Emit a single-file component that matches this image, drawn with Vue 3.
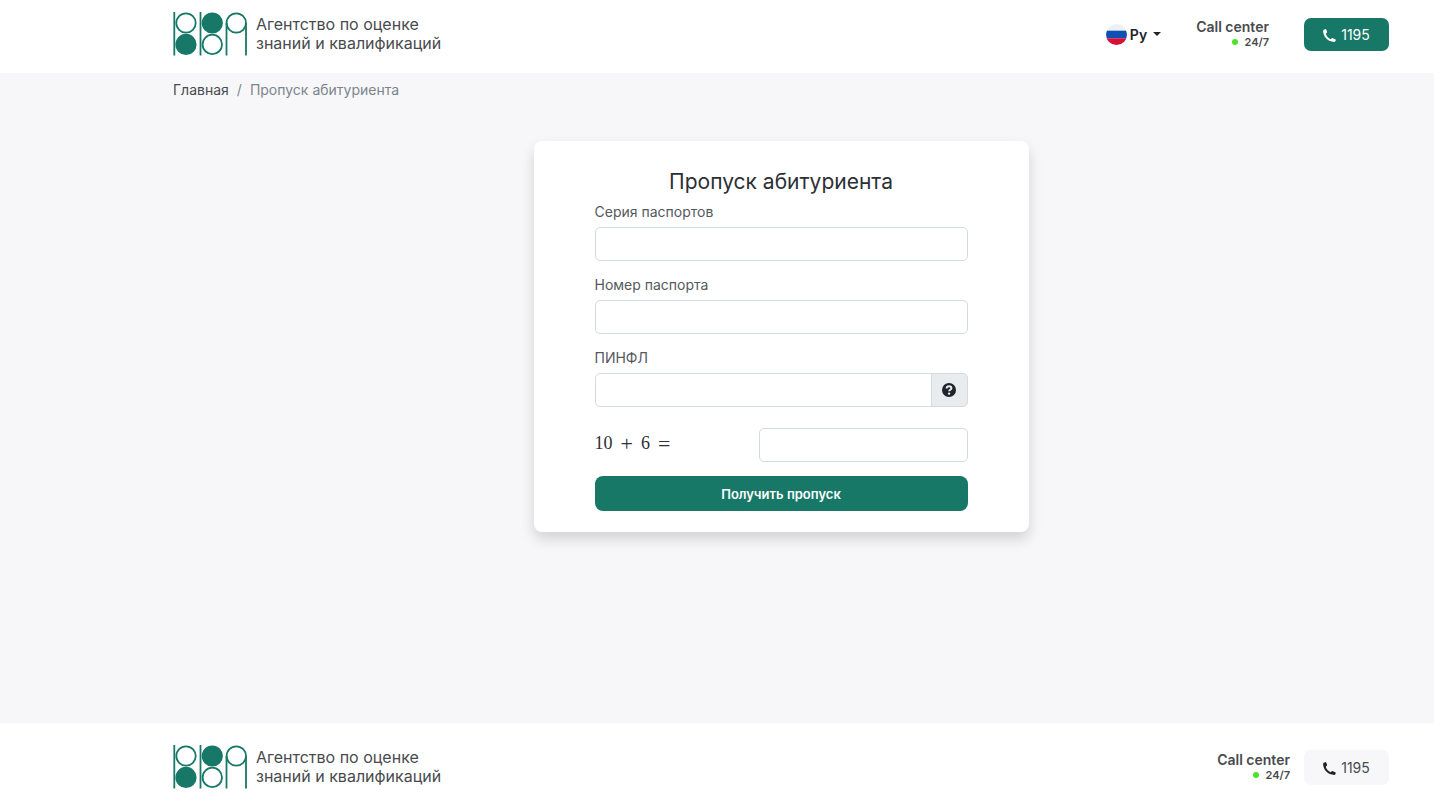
<template>
  <div class="page">
    <header class="bar bar-top">
      <a class="brand" href="#">
        <svg class="logo" viewBox="0 0 74 44" fill="none" stroke="#177867" stroke-width="1.8">
          <path v-for="line in logoLines" :key="line" :d="line" />
          <circle v-for="c in logoCircles" :key="c.x + '-' + c.y" :cx="c.x" :cy="c.y" r="9.7" :fill="c.filled ? '#177867' : 'none'" />
        </svg>
        <span class="brand-name">Агентство по оценке<br>знаний и квалификаций</span>
      </a>

      <div class="actions">
        <button class="lang" type="button">
          <svg class="flag" viewBox="0 0 22 22">
            <clipPath id="flag-round"><circle cx="11" cy="11" r="11" /></clipPath>
            <g clip-path="url(#flag-round)">
              <rect width="22" height="22" fill="#eef0f2" />
              <rect y="7" width="22" height="8" fill="#1050b4" />
              <rect y="15" width="22" height="7" fill="#d80f36" />
            </g>
          </svg>
          <span>Ру</span>
          <span class="caret"></span>
        </button>
        <div class="call">
          <span class="call-title">Call center</span>
          <span class="call-hours"><i class="dot"></i>24/7</span>
        </div>
        <a class="phone phone-green" href="tel:1195">
          <svg class="phone-icon" viewBox="0 0 14 14"><path :d="phonePath" fill="currentColor" /></svg>
          1195
        </a>
      </div>
    </header>

    <main class="content">
      <nav class="breadcrumb">
        <a href="#">Главная</a>
        <span>/</span>
        <span>Пропуск абитуриента</span>
      </nav>

      <form class="card" @submit.prevent>
        <h1>Пропуск абитуриента</h1>

        <div class="field">
          <label for="series">Серия паспортов</label>
          <input id="series" v-model="form.series" type="text">
        </div>

        <div class="field">
          <label for="number">Номер паспорта</label>
          <input id="number" v-model="form.number" type="text">
        </div>

        <div class="field">
          <label for="pinfl">ПИНФЛ</label>
          <div class="input-group">
            <input id="pinfl" v-model="form.pinfl" type="text">
            <button class="help" type="button">
              <svg viewBox="0 0 14 14">
                <circle cx="7" cy="7" r="7" fill="#1d242c" />
                <path d="M4.6 5.5C4.7 4 5.8 3.3 7.100 3.300c1.300 0 2.300.8 2.300 1.900 0 1.600-2.200 1.500-2.200 3.100" fill="none" stroke="#e9ecef" stroke-width="2" />
                <circle cx="7.100" cy="10.600" r="1.200" fill="#e9ecef" />
              </svg>
            </button>
          </div>
        </div>

        <div class="captcha">
          <label for="captcha">
            <span>10</span>
            <span class="operator">+</span>
            <span>6</span>
            <span class="operator">=</span>
          </label>
          <input id="captcha" v-model="form.captcha" type="text">
        </div>

        <button class="submit" type="submit">Получить пропуск</button>
      </form>
    </main>

    <footer class="bar bar-bottom">
      <a class="brand" href="#">
        <svg class="logo" viewBox="0 0 74 44" fill="none" stroke="#177867" stroke-width="1.8">
          <path v-for="line in logoLines" :key="line" :d="line" />
          <circle v-for="c in logoCircles" :key="c.x + '-' + c.y" :cx="c.x" :cy="c.y" r="9.7" :fill="c.filled ? '#177867' : 'none'" />
        </svg>
        <span class="brand-name">Агентство по оценке<br>знаний и квалификаций</span>
      </a>

      <div class="actions actions-bottom">
        <div class="call">
          <span class="call-title">Call center</span>
          <span class="call-hours"><i class="dot"></i>24/7</span>
        </div>
        <a class="phone phone-light" href="tel:1195">
          <svg class="phone-icon" viewBox="0 0 14 14"><path :d="phonePath" fill="currentColor" /></svg>
          1195
        </a>
      </div>
    </footer>
  </div>
</template>

<script setup>
import { reactive } from 'vue'

const form = reactive({
  series: '',
  number: '',
  pinfl: '',
  captcha: ''
})

const logoLines = ['M1.300 0V43.500', 'M27.500 0V43.500', 'M53.500 11V43.500', 'M73 11V43.500']

const logoCircles = [
  { x: 13, y: 11, filled: false },
  { x: 13, y: 32.4, filled: true },
  { x: 39.3, y: 11, filled: true },
  { x: 39.3, y: 32.4, filled: false },
  { x: 63.3, y: 11, filled: false }
]

const phonePath = 'M.8.900 2.400.200c.5-.2 1 0 1.200.5l.8 2.300c.1.400 0 .8-.3 1L3 5.100c.7 2.600 2.700 4.900 5.300 5.900l1.200-1c.3-.3.7-.3 1.100-.1l2.600 1.200c.5.200.7.700.5 1.200l-.5 1c-.2.400-.5.600-1 .6C5.400 13.900.1 8.500.1 2c0-.5.300-.9.7-1.100z'
</script>

<style>
body {
  margin: 0;
}
</style>

<style scoped>
.page {
  display: flex;
  flex-direction: column;
  min-height: 100vh;
  background: #f7f7fa;
  color: #484b4e;
  font-family: Inter, "Liberation Sans", sans-serif;
  font-size: 14px;
  line-height: 21px;
}

.page * {
  box-sizing: border-box;
}

a {
  color: inherit;
  text-decoration: none;
}

button,
input {
  margin: 0;
  font-family: inherit;
  font-size: 14px;
}

button {
  border: none;
  cursor: pointer;
}

.bar {
  display: flex;
  justify-content: space-between;
  align-items: center;
  background: #fff;
}

.bar-top {
  padding: 12px 45px 17px 173px;
}

.bar-bottom {
  padding: 22px 45px 15px 173px;
}

.brand {
  display: flex;
  align-items: center;
  gap: 9px;
}

.logo {
  width: 74px;
  height: 44px;
}

.brand-name {
  font-size: 16px;
  line-height: 19px;
}

.actions {
  display: flex;
  align-items: center;
  gap: 35px;
}

.actions-bottom {
  gap: 14px;
}

.lang {
  display: flex;
  align-items: center;
  gap: 3px;
  padding: 0;
  background: none;
  color: #212529;
  font-weight: 600;
}

.flag {
  width: 21px;
  height: 21px;
}

.caret {
  margin-left: 3px;
  border: 4px solid transparent;
  border-top-color: #212529;
  border-bottom: 0;
}

.call {
  display: flex;
  flex-direction: column;
  align-items: flex-end;
  font-weight: 600;
}

.call-title {
  line-height: 16px;
}

.call-hours {
  display: flex;
  align-items: center;
  gap: 6px;
  font-size: 11px;
  line-height: 14px;
}

.dot {
  width: 6px;
  height: 6px;
  border-radius: 50%;
  background: #4be32c;
}

.phone {
  display: flex;
  align-items: center;
  justify-content: center;
  gap: 5px;
  width: 85px;
  height: 33px;
  border-radius: 7px;
}

.phone-green {
  background: #177867;
  color: #fff;
}

.phone-light {
  height: 35px;
  background: #f7f7fa;
}

.phone-light .phone-icon {
  color: #212529;
}

.phone-icon {
  width: 13px;
  height: 13px;
  margin-top: 3px;
}

.content {
  flex: 1;
  display: flex;
  flex-direction: column;
  padding: 6px 45px 40px 173px;
}

.breadcrumb {
  display: flex;
  gap: 8px;
  color: #7c858d;
}

.breadcrumb a {
  color: #484b4e;
}

.card {
  align-self: center;
  width: 100%;
  max-width: 495px;
  margin-top: 41px;
  padding: 28px 61px 21px;
  border-radius: 8px;
  background: #fff;
  box-shadow: 0 7px 14px rgba(0, 0, 0, 0.15);
}

h1 {
  margin: 0 0 7px;
  color: #2c3035;
  font-size: 21px;
  font-weight: 400;
  line-height: 25px;
  text-align: center;
}

.field {
  margin-bottom: 13px;
}

.field label {
  display: block;
  margin-bottom: 5px;
  color: #55595d;
}

input {
  display: block;
  width: 100%;
  height: 34px;
  padding: 0 11px;
  border: 1px solid #d5dade;
  border-radius: 5px;
  background: #fff;
  color: #212529;
}

.input-group {
  display: flex;
}

.input-group input {
  flex: 1;
  border-radius: 5px 0 0 5px;
}

.help {
  display: flex;
  align-items: center;
  justify-content: center;
  width: 37px;
  height: 34px;
  margin-left: -1px;
  padding: 0;
  border: 1px solid #d5dade;
  border-radius: 0 5px 5px 0;
  background: #e9ecef;
}

.help svg {
  width: 14px;
  height: 14px;
}

.captcha {
  display: flex;
  align-items: center;
  justify-content: space-between;
  margin: 21px 0 14px;
}

.captcha label {
  display: flex;
  align-items: center;
  gap: 8px;
  padding-bottom: 4px;
  color: #2c3035;
  font-family: "Liberation Serif", serif;
  font-size: 18px;
}

.captcha .operator {
  font-size: 22px;
}

.captcha input {
  width: 56%;
}

.submit {
  width: 100%;
  height: 35px;
  border-radius: 8px;
  background: #177867;
  color: #fff;
  font-size: 13px;
  font-weight: 600;
}
</style>
